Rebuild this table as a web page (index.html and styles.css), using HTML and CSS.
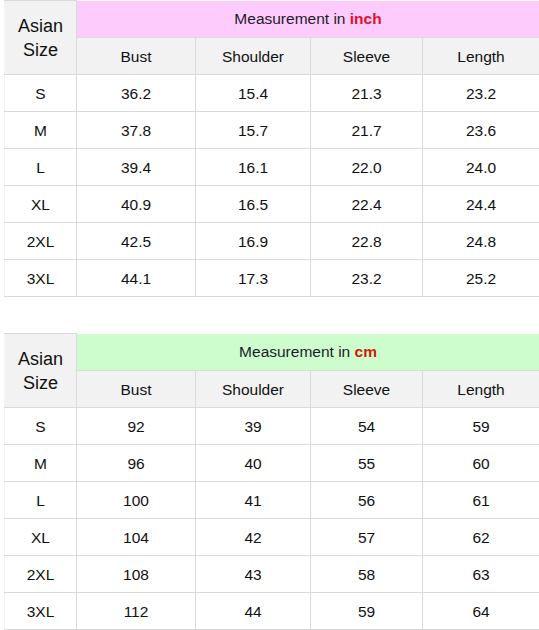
FILE: index.html
```html
<!DOCTYPE html>
<html>
<head>
<meta charset="utf-8">
<link rel="stylesheet" href="styles.css">
</head>
<body>
<div class="page">
  <table class="size-table">
    <colgroup>
      <col class="c-size"><col class="c-bust"><col class="c-shoulder"><col class="c-sleeve"><col class="c-length">
    </colgroup>
    <tr>
      <th class="asian" rowspan="2">Asian<br>Size</th>
      <th class="title pink" colspan="4">Measurement in <b class="unit inch">inch</b></th>
    </tr>
    <tr class="sub">
      <th>Bust</th><th>Shoulder</th><th>Sleeve</th><th>Length</th>
    </tr>
    <tr><td>S</td><td>36.2</td><td>15.4</td><td>21.3</td><td>23.2</td></tr>
    <tr><td>M</td><td>37.8</td><td>15.7</td><td>21.7</td><td>23.6</td></tr>
    <tr><td>L</td><td>39.4</td><td>16.1</td><td>22.0</td><td>24.0</td></tr>
    <tr><td>XL</td><td>40.9</td><td>16.5</td><td>22.4</td><td>24.4</td></tr>
    <tr><td>2XL</td><td>42.5</td><td>16.9</td><td>22.8</td><td>24.8</td></tr>
    <tr><td>3XL</td><td>44.1</td><td>17.3</td><td>23.2</td><td>25.2</td></tr>
  </table>

  <table class="size-table second">
    <colgroup>
      <col class="c-size"><col class="c-bust"><col class="c-shoulder"><col class="c-sleeve"><col class="c-length">
    </colgroup>
    <tr>
      <th class="asian" rowspan="2">Asian<br>Size</th>
      <th class="title green" colspan="4">Measurement in <b class="unit cm">cm</b></th>
    </tr>
    <tr class="sub">
      <th>Bust</th><th>Shoulder</th><th>Sleeve</th><th>Length</th>
    </tr>
    <tr><td>S</td><td>92</td><td>39</td><td>54</td><td>59</td></tr>
    <tr><td>M</td><td>96</td><td>40</td><td>55</td><td>60</td></tr>
    <tr><td>L</td><td>100</td><td>41</td><td>56</td><td>61</td></tr>
    <tr><td>XL</td><td>104</td><td>42</td><td>57</td><td>62</td></tr>
    <tr><td>2XL</td><td>108</td><td>43</td><td>58</td><td>63</td></tr>
    <tr><td>3XL</td><td>112</td><td>44</td><td>59</td><td>64</td></tr>
  </table>
</div>
</body>
</html>
```

FILE: styles.css
```css
html, body {
  margin: 0;
  padding: 0;
  background: #ffffff;
}

.page {
  padding: 0 0 0 4px;
  font-family: "Liberation Sans", Arial, sans-serif;
  color: #111111;
}

.size-table {
  border-collapse: collapse;
  table-layout: fixed;
  width: 535px;
  font-size: 15.5px;
}

.size-table.second {
  margin-top: 36px;
}

.c-size { width: 72px; }
.c-bust { width: 119px; }
.c-shoulder { width: 115px; }
.c-sleeve { width: 112px; }
.c-length { width: 117px; }

.size-table th,
.size-table td {
  height: 34px;
  padding: 2px 0 0 0;
  text-align: center;
  vertical-align: middle;
  border: 1px solid #dadada;
  font-weight: normal;
  line-height: 18px;
}

.size-table td:first-child,
.size-table th.asian {
  border-left-color: #f4f4f4;
}

.size-table th.asian {
  background: #f2f2f2;
  font-size: 18px;
  line-height: 24px;
  padding-top: 1px;
}

.size-table tr.sub th {
  background: #f2f2f2;
}

.size-table th.title {
  height: 36px;
  padding: 0;
  font-size: 15.5px;
  color: #1c1c2a;
  border-top-color: #ffffff;
}

.pink { background: #fdccfd; }
.green { background: #cdfdcd; }

.unit { font-weight: bold; }
.inch { color: #e0102e; }
.cm { color: #d01a08; }
```
